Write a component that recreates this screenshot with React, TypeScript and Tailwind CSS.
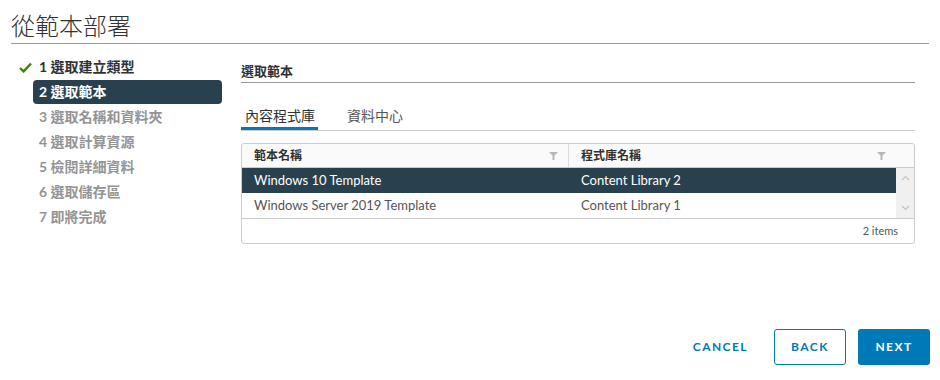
import React from "react";

const Check = () => (
  <svg width="13" height="11" viewBox="0 0 13 11">
    <path d="M1 6 L4.6 9.4 L12 1.5" stroke="#3c8500" strokeWidth="2.4" fill="none" />
  </svg>
);

const Funnel = () => (
  <svg width="9" height="8" viewBox="0 0 9 8">
    <path d="M0 0 H9 L5.5 3.5 V8 H3.5 V3.5 Z" fill="#b8b8b8" />
  </svg>
);

const Chevron = ({ up }: { up?: boolean }) => (
  <svg width="9" height="6" viewBox="0 0 9 6">
    <path d={up ? "M1 5 L4.5 1.5 L8 5" : "M1 1 L4.5 4.5 L8 1"} stroke="#c4c4c4" strokeWidth="1.2" fill="none" />
  </svg>
);

const steps = [
  "1 選取建立類型",
  "2 選取範本",
  "3 選取名稱和資料夾",
  "4 選取計算資源",
  "5 檢閱詳細資料",
  "6 選取儲存區",
  "7 即將完成",
];

export default function App() {
  return (
    <div className="w-[940px] h-[380px] flex flex-col bg-white text-[#565656] font-['Lato','Noto_Sans_CJK_TC',sans-serif]">
      <div className="mx-[11px] mt-[8px] h-[36px] border-b border-[#9a9a9a] text-[24px] leading-[34px] font-light text-[#313131] font-['Noto_Sans_CJK_TC',sans-serif]">
        從範本部署
      </div>
      <div className="flex flex-1 mt-[11px]">
        <div className="w-[241px] flex flex-col gap-[1px]">
          {steps.map((s, i) => (
            <div key={s} className="flex items-center h-[24px]">
              <div className="w-[33px] pl-[19px] flex items-center">{i === 0 && <Check />}</div>
              <div
                className={
                  "w-[189px] h-[24px] px-[6px] rounded-[4px] text-[14px] leading-[24px] font-bold " +
                  (i === 1
                    ? "bg-[#29414e] text-white"
                    : i === 0
                    ? "text-[#313131]"
                    : "text-[#949494]")
                }
              >
                {s}
              </div>
            </div>
          ))}
        </div>
        <div className="w-[674px] flex flex-col">
          <div className="pt-[7px] pb-[2px] text-[13px] leading-[18px] font-bold text-[#313131] border-b border-[#9a9a9a]">
            選取範本
          </div>
          <div className="mt-[14px] flex border-b border-[#cccccc] text-[14px]">
            <div className="pl-[4px] pr-[3px] pt-[9px] pb-[1px] leading-[20px] border-b-[3px] border-[#0079b8] text-[#313131]">
              內容程式庫
            </div>
            <div className="ml-[25px] pl-[4px] pr-[3px] pt-[9px] pb-[1px] leading-[20px] border-b-[3px] border-transparent text-[#565656]">
              資料中心
            </div>
          </div>
          <div className="mt-[12px] border border-[#cccccc] rounded-[3px] flex flex-col">
            <div className="flex h-[24px] bg-[#fafafa] border-b border-[#cccccc] text-[12px] font-bold text-[#313131] rounded-t-[3px]">
              <div className="w-[327px] border-r border-[#dddddd] flex items-center justify-between pl-[12px] pr-[10px]">
                <span>範本名稱</span>
                <Funnel />
              </div>
              <div className="flex-1 flex items-center justify-between pl-[12px] pr-[10px]">
                <span>程式庫名稱</span>
                <Funnel />
              </div>
              <div className="w-[18px]" />
            </div>
            <div className="flex border-b border-[#cccccc]">
              <div className="flex-1 flex flex-col text-[13px]">
                <div className="flex h-[25px] items-center bg-[#29414e] text-white">
                  <div className="w-[327px] pl-[12px]">Windows 10 Template</div>
                  <div className="flex-1 pl-[12px]">Content Library 2</div>
                </div>
                <div className="flex h-[25px] items-center text-[#565656]">
                  <div className="w-[327px] pl-[12px]">Windows Server 2019 Template</div>
                  <div className="flex-1 pl-[12px]">Content Library 1</div>
                </div>
              </div>
              <div className="w-[18px] bg-[#f0f0f0] flex flex-col items-center justify-between py-[7px]">
                <Chevron up />
                <Chevron />
              </div>
            </div>
            <div className="h-[24px] flex items-center justify-end pr-[16px] text-[11px] text-[#565656]">
              2 items
            </div>
          </div>
        </div>
      </div>
      <div className="flex justify-end items-center gap-[12px] pr-[10px] pb-[15px] text-[12px] font-bold tracking-[0.12em]">
        <button className="h-[36px] px-[14px] text-[#0079b8]">CANCEL</button>
        <button className="h-[36px] w-[72px] border border-[#0079b8] rounded-[3px] text-[#0079b8]">BACK</button>
        <button className="h-[36px] w-[72px] bg-[#0079b8] rounded-[3px] text-white">NEXT</button>
      </div>
    </div>
  );
}
